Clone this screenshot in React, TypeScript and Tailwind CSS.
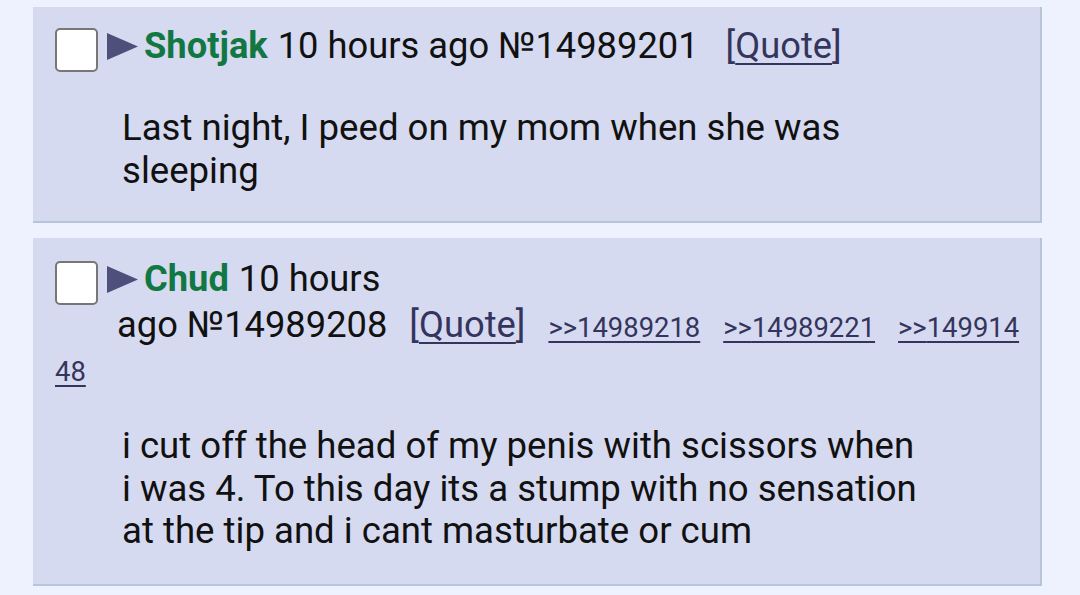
const Checkbox = () => (
  <div className="mt-[5px] h-[44px] w-[43px] shrink-0 self-start rounded-[5px] border-2 border-[#777777] bg-white" />
);

const Arrow = () => (
  <svg width="31" height="27" viewBox="0 0 31 27" className="ml-[9px] mr-[6px] shrink-0">
    <polygon points="0,0 31,13.5 0,27" fill="#4f4f7b" />
  </svg>
);

const QuoteLink = () => (
  <span className="text-[#34345c]">
    [<span className="underline decoration-2 underline-offset-[5px]">Quote</span>]
  </span>
);

const Backlink = ({ id }: { id: string }) => (
  <span className="ml-[23px] text-[27.4px] text-[#34345c] underline decoration-2 underline-offset-[4px]">
    &gt;&gt;{id}
  </span>
);

export default function App() {
  return (
    <div
      className="h-[595px] w-[1080px] overflow-hidden bg-[#eef2ff] pl-[33px] pt-[7px] text-[#111111]"
      style={{ fontFamily: 'Roboto, "Noto Sans", sans-serif' }}
    >
      {/* first post */}
      <div className="w-[1009px] border-b-2 border-r-2 border-[#b7c5d9] bg-[#d6daf0] pb-[29px] pl-[22px] pt-[16px]">
        <div className="flex h-[46px] items-center text-[36.3px] leading-[46px] whitespace-nowrap">
          <Checkbox />
          <Arrow />
          <span className="font-bold text-[#117743]">Shotjak</span>
          <span className="ml-[10px]">10 hours ago №14989201</span>
          <span className="ml-[27px]">
            <QuoteLink />
          </span>
        </div>
        <div className="mt-[38px] pl-[67px] text-[36.6px] leading-[42.5px]">
          Last night, I peed on my mom when she was
          <br />
          sleeping
        </div>
      </div>

      {/* second post */}
      <div className="mt-[15px] w-[1009px] border-b-2 border-r-2 border-[#b7c5d9] bg-[#d6daf0] pb-[31px] pl-[22px] pt-[18px]">
        <div className="flex h-[46px] items-center text-[36.3px] leading-[46px] whitespace-nowrap">
          <Checkbox />
          <Arrow />
          <span className="font-bold text-[#117743]">Chud</span>
          <span className="ml-[10px]">10 hours</span>
        </div>
        <div className="flex h-[46px] items-baseline pl-[62px] text-[36.3px] leading-[46px] whitespace-nowrap">
          <span>ago №14989208</span>
          <span className="ml-[22px]">
            <QuoteLink />
          </span>
          <Backlink id="14989218" />
          <Backlink id="14989221" />
          <Backlink id="149914" />
        </div>
        <div className="text-[27.4px] leading-[48px] text-[#34345c]">
          <span className="underline decoration-2 underline-offset-[4px]">48</span>
        </div>
        <div className="mt-[29px] pl-[67px] text-[36.6px] leading-[42.5px]">
          i cut off the head of my penis with scissors when
          <br />
          i was 4. To this day its a stump with no sensation
          <br />
          at the tip and i cant masturbate or cum
        </div>
      </div>
    </div>
  );
}
